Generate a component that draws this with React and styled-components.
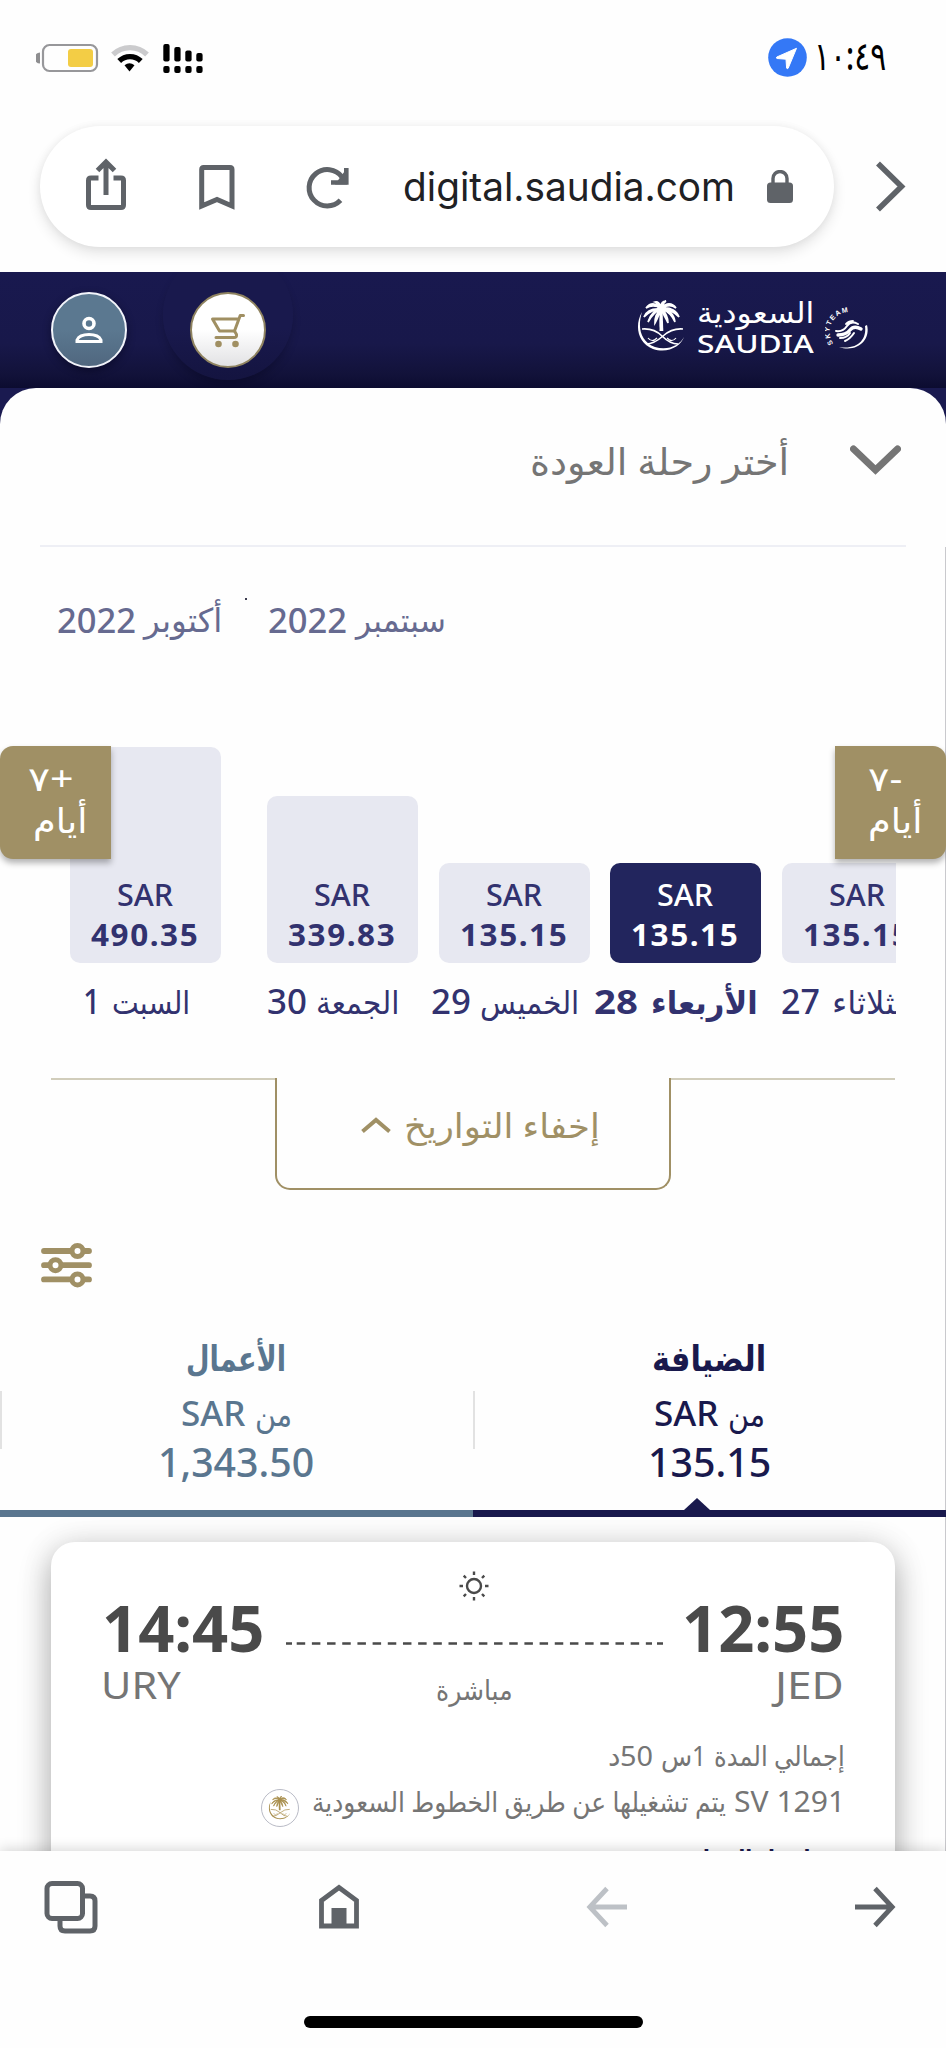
import React, { useLayoutEffect, useRef, useState } from "react";
import styled, { createGlobalStyle } from "styled-components";

const GlobalStyle = createGlobalStyle`
  :root {
    --navy: #19194d;
    --navy-soft: #32326f;
    --gold: #a09065;
    --steel: #5a768f;
    --gray: #757575;
    --icon: #5f6368;
  }
  * { box-sizing: border-box; }
  body {
    margin: 0;
    background: #fff;
    font-family: "Noto Sans", "DejaVu Sans", sans-serif;
  }
  svg { display: block; flex: none; }
`;

const Screen = styled.div`
  width: 946px;
  height: 2048px;
  display: flex;
  flex-direction: column;
  overflow: hidden;
  background: #fefefe;
`;

/* ---------- text ---------- */

const TextBox = styled.span`
  display: block;
  flex: none;
  width: ${({ $w }) => $w}px;
  height: ${({ $lh }) => $lh}px;
  margin-left: ${({ $ml }) => $ml || 0}px;
  direction: ltr;
  color: ${({ $color }) => $color || "inherit"};
  font-family: ${({ $font }) => $font || "inherit"};
  font-size: ${({ $size }) => $size}px;
  font-weight: ${({ $weight }) => $weight || 400};
  line-height: ${({ $lh }) => $lh}px;
  letter-spacing: ${({ $ls }) => $ls || 0}px;
`;

const TextInner = styled.span`
  display: inline-block;
  white-space: nowrap;
  transform-origin: 0 50%;
  vertical-align: top;
`;

// keeps every label at the width of its slot, whichever arabic font is installed
const Label = ({ w, size, lh, weight, color, font, ls, ml, rtl, children }) => {
  const ref = useRef(null);
  const [scale, setScale] = useState(1);

  useLayoutEffect(() => {
    if (ref.current.offsetWidth) {
      setScale(w / ref.current.offsetWidth);
    }
  }, [w, children]);

  return (
    <TextBox
      $w={w}
      $size={size}
      $lh={lh || size * 1.4}
      $weight={weight}
      $color={color}
      $font={font}
      $ls={ls}
      $ml={ml}
    >
      <TextInner
        ref={ref}
        dir={rtl ? "rtl" : "ltr"}
        style={{ transform: `scaleX(${scale})` }}
      >
        {children}
      </TextInner>
    </TextBox>
  );
};

/* ---------- status bar ---------- */

const StatusBar = styled.div`
  height: 112px;
  flex: none;
  display: flex;
  justify-content: space-between;
  padding: 38px 60px 0 36px;
`;

const StatusGroup = styled.div`
  display: flex;
  align-items: flex-start;
  gap: ${({ $gap }) => $gap || 0}px;
`;

const TimeWrap = styled.div`
  margin-top: -3px;
`;

const StatusIcons = () => (
  <svg width="170" height="42" viewBox="36 38 170 42">
    <path d="M40 52.500 a5 5 0 0 0 0 11z" fill="#8e8e90" />
    <rect x="43" y="45" width="54" height="26" rx="6.500" fill="none" stroke="#97979a" strokeWidth="2.200" />
    <rect x="68" y="49" width="25" height="18" rx="3" fill="#f3cd45" />
    <g fill="none">
      <path d="M113 54.500a24.500 24.500 0 0 1 34 0" stroke="#cbcbcd" strokeWidth="5.400" />
      <path d="M119.200 61a15.500 15.500 0 0 1 21.600 0" stroke="#000" strokeWidth="5.400" />
    </g>
    <path d="M124.500 65.300a8 8 0 0 1 10 0L129.500 71.500z" fill="#000" />
    <rect x="163.300" y="44" width="6.300" height="17.500" rx="2" />
    <rect x="174.300" y="47" width="6.300" height="14.500" rx="2" />
    <rect x="185.300" y="50.500" width="6.300" height="11" rx="2" />
    <rect x="196.300" y="53" width="6.300" height="8.500" rx="2" />
    <rect x="163.300" y="66" width="6.300" height="7" rx="2" />
    <rect x="174.300" y="66" width="6.300" height="7" rx="2" />
    <rect x="185.300" y="66" width="6.300" height="7" rx="2" />
    <rect x="196.300" y="66" width="6.300" height="7" rx="2" />
  </svg>
);

const LocationIcon = () => (
  <svg width="39" height="39" viewBox="0 0 39 39">
    <circle cx="19.500" cy="19.500" r="19.300" fill="#3478f6" />
    <path d="M28.500 10.300 L8.800 19 q-1.200 1 .3 1.500 L18 21.200 L18.600 30 q.6 1.400 1.600 .2z" fill="#fff" stroke="#fff" strokeLinejoin="round" />
  </svg>
);

/* ---------- address bar ---------- */

const AddressRow = styled.div`
  height: 160px;
  flex: none;
  display: flex;
  align-items: flex-start;
  gap: 40px;
  padding: 14px 40px 0;
`;

const Pill = styled.div`
  width: 795px;
  height: 121px;
  display: flex;
  align-items: center;
  padding-left: 46px;
  border-radius: 61px;
  background: #fff;
  box-shadow: 0 6px 14px rgba(0, 0, 0, 0.11), 0 0 8px rgba(0, 0, 0, 0.05);
`;

const PillIcons = () => (
  <svg width="318" height="60" viewBox="86 156 318 60" fill="none" stroke="#5f6368" strokeWidth="5">
    <path d="M98.500 177H91q-2.500 0-2.500 2.500V204q0 2.500 2.500 2.500H121q2.500 0 2.500-2.500V179.500q0-2.500-2.500-2.500H113.500" />
    <path d="M106 194V161M97.500 169.500L106 161l8.500 8.500" />
    <path d="M201.700 205V168.500q0-2 2-2H230q2 0 2 2V205L217 198.500z" />
    <path d="M340.500 199.300A18.200 18.200 0 1 1 342 176" />
    <path d="M346.300 167V181.500H331" strokeWidth="4.600" />
    <path d="M347 167V183.500H335z" fill="#5f6368" stroke="none" />
  </svg>
);

const LockIcon = () => (
  <svg width="26" height="34" viewBox="0 0 26 34">
    <rect x="0" y="12.500" width="26" height="20.500" rx="3.500" fill="#5f6368" />
    <path d="M6 14V8.500a7 7 0 0 1 14 0V14" fill="none" stroke="#5f6368" strokeWidth="3.400" />
  </svg>
);

const NextIcon = () => (
  <svg width="32" height="121" viewBox="0 0 32 121">
    <path d="M4 37.500L27.500 60.500L4 83.500" fill="none" stroke="#5f6368" strokeWidth="5.600" />
  </svg>
);

/* ---------- airline header ---------- */

const Brand = styled.header`
  height: 116px;
  flex: none;
  display: flex;
  align-items: flex-start;
  padding-left: 51px;
  overflow: hidden;
  background: linear-gradient(#19194f 0%, #18184a 62%, #12123a 88%, #0c0c30 100%);
`;

const RoundButton = styled.div`
  width: 76px;
  height: 76px;
  margin-top: ${({ $gold }) => ($gold ? 42 : 20)}px;
  display: flex;
  align-items: center;
  justify-content: center;
  border-radius: 50%;
  border: 2.500px solid ${({ $gold }) => ($gold ? "#8f8360" : "#f2f4fa")};
  background: ${({ $gold }) =>
    $gold
      ? "linear-gradient(#fff 50%, #e2e2e4)"
      : "linear-gradient(#5b7890 50%, #50677f)"};
  box-shadow: ${({ $gold }) =>
    $gold ? "none" : "0 3px 8px rgba(0, 0, 20, 0.45)"};
`;

const CartHalo = styled.div`
  width: 130px;
  height: 130px;
  margin: -22px 0 0 36px;
  display: flex;
  align-items: flex-start;
  justify-content: center;
  border-radius: 50%;
  background: linear-gradient(#19194d 60%, #141440);
  box-shadow: 0 6px 10px -2px rgba(0, 0, 20, 0.3);
`;

const UserIcon = () => (
  <svg width="28" height="30" viewBox="0 0 28 30" fill="none" stroke="#fff">
    <circle cx="14" cy="8.500" r="5" strokeWidth="3.600" />
    <path d="M2 26.500V25Q4.500 19.500 14 19.500T26 25V26.500z" strokeWidth="3" />
  </svg>
);

const CartIcon = () => (
  <svg width="36" height="36" viewBox="0 0 36 36" fill="none" stroke="#a08f62" strokeWidth="3" strokeLinecap="round" strokeLinejoin="round">
    <path d="M33.500 3.500H30.200L24.500 19H9.500L2.500 7H28.500" />
    <path d="M24.500 19L26.500 22.500Q27 25.500 24 25.500H6" />
    <circle cx="8.500" cy="32" r="3.300" fill="#a08f62" stroke="none" />
    <circle cx="25.500" cy="32" r="3.300" fill="#a08f62" stroke="none" />
  </svg>
);

const Logo = styled.div`
  display: flex;
  align-items: flex-start;
  margin: 28px 0 0 343px;
  color: #fff;
`;

const LogoName = styled.div`
  width: 116px;
  margin: -5px 12px 0 9px;
`;

const SkyWrap = styled.div`
  margin-top: 7px;
`;

const palmPath =
  "M24 29C23 25 23 18 24 9C14 8 9 12 7 17C13 11 18 9 24 9C17 10 13 15 11 22C15 15 19 11 24 9C19 14 18 17 18 23C21 18 22 14 24 9C26 14 29 18 31 23C31 18 29 13 25 9C30 11 35 15 38 22C37 15 33 10 25 9C32 9 37 12 42 17C40 11 34 7 25 8C30 5 35 5 39 8C35 2 29 3 25 7C26 4 27 2 29 1C25 1 24 4 24 7C23 4 21 1 18 2C21 3 22 5 23 7C18 3 13 3 9 8C14 5 18 5 24 8z";

const Emblem = ({ size, color }) => (
  <svg width={size} height={size} viewBox="0 0 50 52">
    <path d={palmPath} fill={color} stroke={color} strokeWidth="1.700" />
    <circle cx="24.500" cy="9" r="4.500" fill={color} />
    <path d="M23.200 9H25.500L26.300 31H22.500z" fill={color} />
    <g fill="none" stroke={color} strokeWidth="1.600">
      <path d="M5 29Q17 28 25 36T41 44M46 29Q35 28 26 36T9 44" />
      <path d="M11 38Q15 43 20 38M39 38Q35 43 30 38" strokeWidth="1.200" />
    </g>
    <path d="M5 12C-3 26 1 43 16 49C31 54 44 46 47 37C43 45 31 51 18 47C4 42 0 28 5 12z" fill={color} />
  </svg>
);

const SkyTeam = () => (
  <svg width="46" height="46" viewBox="0 0 46 46">
    <defs>
      <path id="skyArc" d="M8.500 36.500A18 18 0 0 1 40 13" />
    </defs>
    <text fill="#fff" fontSize="7" fontWeight="700" letterSpacing="1.300" fontFamily="Liberation Sans, sans-serif">
      <textPath href="#skyArc">SKYTEAM</textPath>
    </text>
    <path d="M42 18C46 33 32 46 14 40C32 43 42 33 40 19z" fill="#fff" />
    <g fill="none" stroke="#fff" strokeLinecap="round">
      <path d="M11 24Q18 25 22 19T33 17" strokeWidth="2" />
      <path d="M13 28Q21 28 25 23T36 22" strokeWidth="3.400" />
      <path d="M15 31Q22 31 25 26M20 34Q25 32 29 26" strokeWidth="2" />
      <path d="M21 17Q24 14 28 14" strokeWidth="1.800" />
    </g>
  </svg>
);

/* ---------- sheet ---------- */

const SheetBack = styled.div`
  height: 1463px;
  flex: none;
  overflow: hidden;
  background: linear-gradient(#1a1a50 60px, #fefefe 60px);
`;

const Sheet = styled.main`
  height: 1463px;
  border-radius: 36px 36px 0 0;
  background: #fefefe;
  overflow: hidden;
`;

const TitleRow = styled.div`
  height: 159px;
  margin: 0 40px;
  padding: 46px 5px 0 0;
  display: flex;
  justify-content: flex-end;
  gap: 61px;
  border-bottom: 2px solid #eeeff5;
`;

const ChevronDown = () => (
  <svg width="51" height="60" viewBox="0 0 51 60">
    <path d="M3.500 15L25.500 36L47.500 15" fill="none" stroke="#757575" strokeWidth="7" strokeLinecap="round" />
  </svg>
);

const Content = styled.div`
  border-right: 1px solid #c9c9cd;
`;

const Months = styled.div`
  height: 197px;
  display: flex;
  align-items: flex-start;
  padding: 48px 0 0 57px;
  color: #666a90;
`;

const MonthDot = styled.i`
  width: 2px;
  height: 2px;
  margin: 3px 21px 0 23px;
  background: #3c3c50;
`;

const Prices = styled.section`
  position: relative;
  height: 334px;
`;

const Strip = styled.div`
  width: 845px;
  height: 285px;
  margin-left: 51px;
  padding-left: 19px;
  display: flex;
  gap: 20.500px;
  overflow: hidden;
`;

const Day = styled.div`
  width: 151px;
  flex: none;
  display: flex;
  flex-direction: column;
  justify-content: flex-end;
  margin-right: ${({ $monthEnd }) => ($monthEnd ? 25.5 : 0)}px;
`;

const Bar = styled.div`
  height: ${({ $h }) => $h}px;
  display: flex;
  flex-direction: column;
  align-items: center;
  justify-content: flex-end;
  padding: 0 1px 8px 0;
  border-radius: 10px;
  color: ${({ $active }) => ($active ? "#fff" : "var(--navy-soft)")};
  background: ${({ $active }) => ($active ? "#22255d" : "#e7e8f1")};
`;

const DayLabel = styled.div`
  height: 66px;
  width: 172px;
  margin-left: -20px;
  padding-top: 14px;
  display: flex;
  justify-content: center;
  gap: ${({ $gap }) => $gap}px;
  color: var(--navy-soft);
`;

const WeekButton = styled.div`
  position: absolute;
  top: 2px;
  ${({ $side }) => $side}: ${({ $side }) => ($side === "right" ? -1 : 0)}px;
  width: 111px;
  height: 113px;
  padding: 11px 0 0 ${({ $side }) => ($side === "right" ? 33 : 28)}px;
  border-radius: ${({ $side }) =>
    $side === "right" ? "0 13px 13px 0" : "13px 0 0 13px"};
  background: var(--gold);
  color: #fff;
  box-shadow: 0 4px 6px rgba(0, 0, 0, 0.3);
`;

const ToggleRow = styled.div`
  display: flex;
  align-items: flex-start;
  margin: 0 50px 0 51px;
`;

const ToggleLine = styled.div`
  flex: 1;
  height: 2px;
  background: #d1cdbb;
`;

const Toggle = styled.div`
  width: 396px;
  height: 112px;
  display: flex;
  align-items: flex-start;
  gap: 13px;
  padding: 24px 0 0 84px;
  border: 2px solid var(--gold);
  border-top: 0;
  border-radius: 0 0 15px 15px;
  color: var(--gold);
`;

const CaretUp = () => (
  <svg width="30" height="40" viewBox="0 0 30 40">
    <path d="M1.500 29.500L15 18L28.500 29.500" fill="none" stroke="#a09065" strokeWidth="4" />
  </svg>
);

const FilterRow = styled.div`
  height: 130px;
  padding: 52px 0 0 41px;
`;

const FilterIcon = () => (
  <svg width="51" height="46" viewBox="0 0 51 46" stroke="#a09065" strokeWidth="5.800" strokeLinecap="round">
    <path d="M3 9H48M3 23.200H48M3 37.400H48" />
    <g fill="#fff" strokeWidth="5">
      <circle cx="36.500" cy="9" r="5.500" />
      <circle cx="14.500" cy="23.200" r="5.500" />
      <circle cx="36.500" cy="37.400" r="5.500" />
    </g>
  </svg>
);

const Tabs = styled.div`
  display: flex;
  height: 197px;
  margin-right: -1px;
`;

const Tab = styled.div`
  position: relative;
  flex: 1;
  display: flex;
  flex-direction: column;
  align-items: center;
  padding: 10px 1px 0 0;
  color: ${({ $color }) => $color};
  border-bottom: 7.500px solid ${({ $color }) => $color};
  &::before {
    content: "";
    position: absolute;
    left: 0;
    top: 71px;
    width: 2px;
    height: 58px;
    background: #e2e2e2;
  }
`;

const Pointer = styled.i`
  position: absolute;
  bottom: 0;
  left: 211px;
  border: 13px solid transparent;
  border-top: 0;
  border-bottom: 12px solid var(--navy);
`;

const TabFrom = styled.div`
  display: flex;
  gap: 10px;
`;

const Results = styled.div`
  padding: 25px 50px 0 51px;
`;

const Card = styled.article`
  height: 420px;
  padding: 29px 52px 0 53px;
  border-radius: 24px;
  background: #fff;
  color: var(--gray);
  box-shadow: 0 12px 32px rgba(0, 0, 0, 0.3), 0 0 34px rgba(0, 0, 0, 0.08);
`;

const Route = styled.div`
  display: flex;
  height: 165px;
`;

const Stop = styled.div`
  width: 158px;
  padding-top: 26px;
  display: flex;
  flex-direction: column;
  gap: 3px;
  align-items: ${({ $end }) => ($end ? "flex-end" : "flex-start")};
  margin-right: ${({ $end }) => ($end ? -1 : 0)}px;
`;

const Middle = styled.div`
  flex: 1;
  display: flex;
  flex-direction: column;
  align-items: center;
`;

const SunIcon = () => (
  <svg width="30" height="30" viewBox="0 0 30 30" fill="none" stroke="#4a4a4a" strokeWidth="2.400">
    <circle cx="15" cy="15" r="7" />
    <path d="M15 .5V4M15 26V29.500M.5 15H4M26 15H29.500M4.700 4.700L7 7M23 23L25.300 25.300M4.700 25.300L7 23M23 7L25.300 4.700" />
  </svg>
);

const DashLine = () => (
  <svg width="377" height="3" viewBox="0 0 377 3">
    <path d="M0 1.500H6M10.700 1.500H366M371 1.500H377" stroke="#4a4a4a" strokeWidth="2.400" strokeDasharray="8.500 6.680" />
  </svg>
);

const DashWrap = styled.div`
  margin: 41px 0 24px;
`;

const InfoRow = styled.div`
  direction: rtl;
  display: flex;
  align-items: flex-start;
  height: 45.500px;
  margin-right: -2px;
`;

const Space = styled.i`
  width: ${({ $w }) => $w}px;
`;

const Badge = styled.div`
  width: 38px;
  height: 38px;
  margin-top: 7px;
  display: flex;
  align-items: center;
  justify-content: center;
  border: 1.500px solid #b9bbc6;
  border-radius: 50%;
`;

/* ---------- browser bottom bar ---------- */

const BottomBar = styled.nav`
  position: relative;
  height: 197px;
  flex: none;
  display: flex;
  flex-direction: column;
  align-items: center;
  justify-content: space-between;
  padding: 26px 0 20px;
  background: #fefefe;
  box-shadow: 0 -2px 12px rgba(0, 0, 0, 0.16);
`;

const NavIcons = styled.div`
  width: 858px;
  display: flex;
  align-items: center;
  justify-content: space-between;
`;

const NavButton = styled.div`
  width: 54px;
  display: flex;
  justify-content: center;
`;

const HomeIndicator = styled.div`
  width: 339px;
  height: 12.500px;
  border-radius: 7px;
  background: #000;
`;

const TabsIcon = () => (
  <svg width="54" height="60" viewBox="44 1876 54 60" fill="none" stroke="#5f6368" strokeWidth="5">
    <path d="M84 1895H90q5 0 5 5V1925q0 5-5 5H65q-5 0-5-5V1919" />
    <rect x="47" y="1882.500" width="35.500" height="35" rx="5" />
  </svg>
);

const HomeIcon = () => (
  <svg width="42" height="48" viewBox="0 0 42 48">
    <path d="M3.500 43V17.500L21 4.500L38.500 17.500V43z" fill="none" stroke="#5f6368" strokeWidth="4.800" />
    <rect x="13.500" y="25" width="15" height="18" fill="#5f6368" />
  </svg>
);

const ArrowIcon = ({ color, flip }) => (
  <svg width="42" height="42" viewBox="0 0 42 42">
    <path
      d={flip ? "M41 21H5M21 2.500L3.800 21L21 39.500" : "M1 21H37M21 2.500L38.200 21L21 39.500"}
      fill="none"
      stroke={color}
      strokeWidth="4.800"
    />
  </svg>
);

const days = [
  { num: "1", numW: 17, name: "السبت", nameW: 78, price: "490.35", h: 216, gap: 12 },
  { num: "30", numW: 40, name: "الجمعة", nameW: 83, price: "339.83", h: 167, gap: 9 },
  { num: "29", numW: 40, name: "الخميس", nameW: 99, price: "135.15", h: 100, gap: 9 },
  { num: "28", numW: 44, name: "الأربعاء", nameW: 107, price: "135.15", h: 100, gap: 13, active: true },
  { num: "27", numW: 39, name: "الثلاثاء", nameW: 82, price: "135.15", h: 100, gap: 12 },
];

const App = () => {
  return (
    <Screen>
      <GlobalStyle />
      <StatusBar>
        <StatusIcons />
        <StatusGroup $gap={7}>
          <LocationIcon />
          <TimeWrap>
            <Label w={72} size={39} lh={40} weight={500} color="#000">١٠:٤٩</Label>
          </TimeWrap>
        </StatusGroup>
      </StatusBar>

      <AddressRow>
        <Pill>
          <PillIcons />
          <Label w={332} size={39} lh={58} ml={-1} color="#202124" font="Inter, sans-serif">
            digital.saudia.com
          </Label>
          <Space $w={32} />
          <LockIcon />
        </Pill>
        <NextIcon />
      </AddressRow>

      <Brand>
        <RoundButton>
          <UserIcon />
        </RoundButton>
        <CartHalo>
          <RoundButton $gold>
            <CartIcon />
          </RoundButton>
        </CartHalo>
        <Logo>
          <Emblem size={52} color="#fff" />
          <LogoName>
            <Label w={117} size={29} lh={34} weight={400} rtl>السعودية</Label>
            <Label w={117} size={26} lh={28} weight={500}>SAUDIA</Label>
          </LogoName>
          <SkyWrap>
            <SkyTeam />
          </SkyWrap>
        </Logo>
      </Brand>

      <SheetBack>
        <Sheet>
          <TitleRow>
            <Label w={259} size={37} lh={53} rtl color="var(--gray)">أختر رحلة العودة</Label>
            <ChevronDown />
          </TitleRow>
          <Content>
            <Months>
              <Label w={79} size={35} weight={500}>2022</Label>
              <Label w={78} size={33} lh={49} ml={8} rtl>أكتوبر</Label>
              <MonthDot />
              <Label w={79} size={35} weight={500}>2022</Label>
              <Label w={90} size={33} lh={49} ml={9} rtl>سبتمبر</Label>
            </Months>

            <Prices>
              <Strip>
                {days.map((day, index) => (
                  <Day key={index} $monthEnd={index === 0}>
                    <Bar $h={day.h} $active={day.active}>
                      <Label w={56} size={30} lh={41} weight={500}>SAR</Label>
                      <Label w={108} size={30} lh={40} weight={700} ls={1.5}>
                        {day.price}
                      </Label>
                    </Bar>
                    <DayLabel $gap={day.gap}>
                      <Label w={day.numW} size={34} lh={49} weight={day.active ? 700 : 500}>
                        {day.num}
                      </Label>
                      <Label w={day.nameW} size={32} lh={49} weight={day.active ? 700 : 400} rtl>
                        {day.name}
                      </Label>
                    </DayLabel>
                  </Day>
                ))}
              </Strip>
              <WeekButton $side="left">
                <Label w={46} size={34} lh={42} rtl>+٧</Label>
                <Label w={54} size={34} lh={42} ml={5} rtl>أيام</Label>
              </WeekButton>
              <WeekButton $side="right">
                <Label w={34} size={34} lh={42} rtl>-٧</Label>
                <Label w={54} size={34} lh={42} rtl>أيام</Label>
              </WeekButton>
            </Prices>

            <ToggleRow>
              <ToggleLine />
              <Toggle>
                <CaretUp />
                <Label w={196} size={34} rtl>إخفاء التواريخ</Label>
              </Toggle>
              <ToggleLine />
            </ToggleRow>

            <FilterRow>
              <FilterIcon />
            </FilterRow>

            <Tabs>
              <Tab $color="var(--steel)">
                <Label w={100} size={35} lh={56} weight={700} rtl>الأعمال</Label>
                <TabFrom>
                  <Label w={64} size={34} lh={54} weight={500}>SAR</Label>
                  <Label w={37} size={34} lh={54} rtl>من</Label>
                </TabFrom>
                <Label w={156} size={39} lh={44} weight={500}>1,343.50</Label>
              </Tab>
              <Tab $color="var(--navy)">
                <Label w={114} size={35} lh={56} weight={700} rtl>الضيافة</Label>
                <TabFrom>
                  <Label w={64} size={34} lh={54} weight={500}>SAR</Label>
                  <Label w={37} size={34} lh={54} rtl>من</Label>
                </TabFrom>
                <Label w={123} size={39} lh={44} weight={500}>135.15</Label>
                <Pointer />
              </Tab>
            </Tabs>

            <Results>
              <Card>
                <Route>
                  <Stop>
                    <Label w={162} size={64} lh={61} ml={-2} weight={700} color="#4a4a4a">14:45</Label>
                    <Label w={80} size={39} lh={46} ml={-3}>URY</Label>
                  </Stop>
                  <Middle>
                    <SunIcon />
                    <DashWrap>
                      <DashLine />
                    </DashWrap>
                    <Label w={77} size={28} lh={40} rtl>مباشرة</Label>
                  </Middle>
                  <Stop $end>
                    <Label w={162} size={64} lh={61} weight={700} color="#4a4a4a">12:55</Label>
                    <Label w={69} size={39} lh={46}>JED</Label>
                  </Stop>
                </Route>
                <InfoRow>
                  <Label w={131} size={28} lh={38} rtl>إجمالي المدة</Label>
                  <Space $w={8} />
                  <Label w={14} size={28} lh={38}>1</Label>
                  <Label w={31} size={28} lh={38} rtl>س</Label>
                  <Space $w={8} />
                  <Label w={33} size={28} lh={38}>50</Label>
                  <Label w={12} size={28} lh={38} rtl>د</Label>
                </InfoRow>
                <InfoRow>
                  <Label w={111} size={29} lh={38}>SV 1291</Label>
                  <Space $w={8} />
                  <Label w={414} size={28} lh={38} rtl>
                    يتم تشغيلها عن طريق الخطوط السعودية
                  </Label>
                  <Space $w={13} />
                  <Badge>
                    <Emblem size={24} color="#a98f4e" />
                  </Badge>
                </InfoRow>
                <InfoRow>
                  <Space $w={12} />
                  <Label w={143} size={30} lh={67} weight={700} color="var(--navy)" rtl>
                    تفاصيل الرحلة
                  </Label>
                </InfoRow>
              </Card>
            </Results>
          </Content>
        </Sheet>
      </SheetBack>

      <BottomBar>
        <NavIcons>
          <NavButton>
            <TabsIcon />
          </NavButton>
          <NavButton>
            <HomeIcon />
          </NavButton>
          <NavButton>
            <ArrowIcon color="#bdc1c6" flip />
          </NavButton>
          <NavButton>
            <ArrowIcon color="#5f6368" />
          </NavButton>
        </NavIcons>
        <HomeIndicator />
      </BottomBar>
    </Screen>
  );
};

export default App;
